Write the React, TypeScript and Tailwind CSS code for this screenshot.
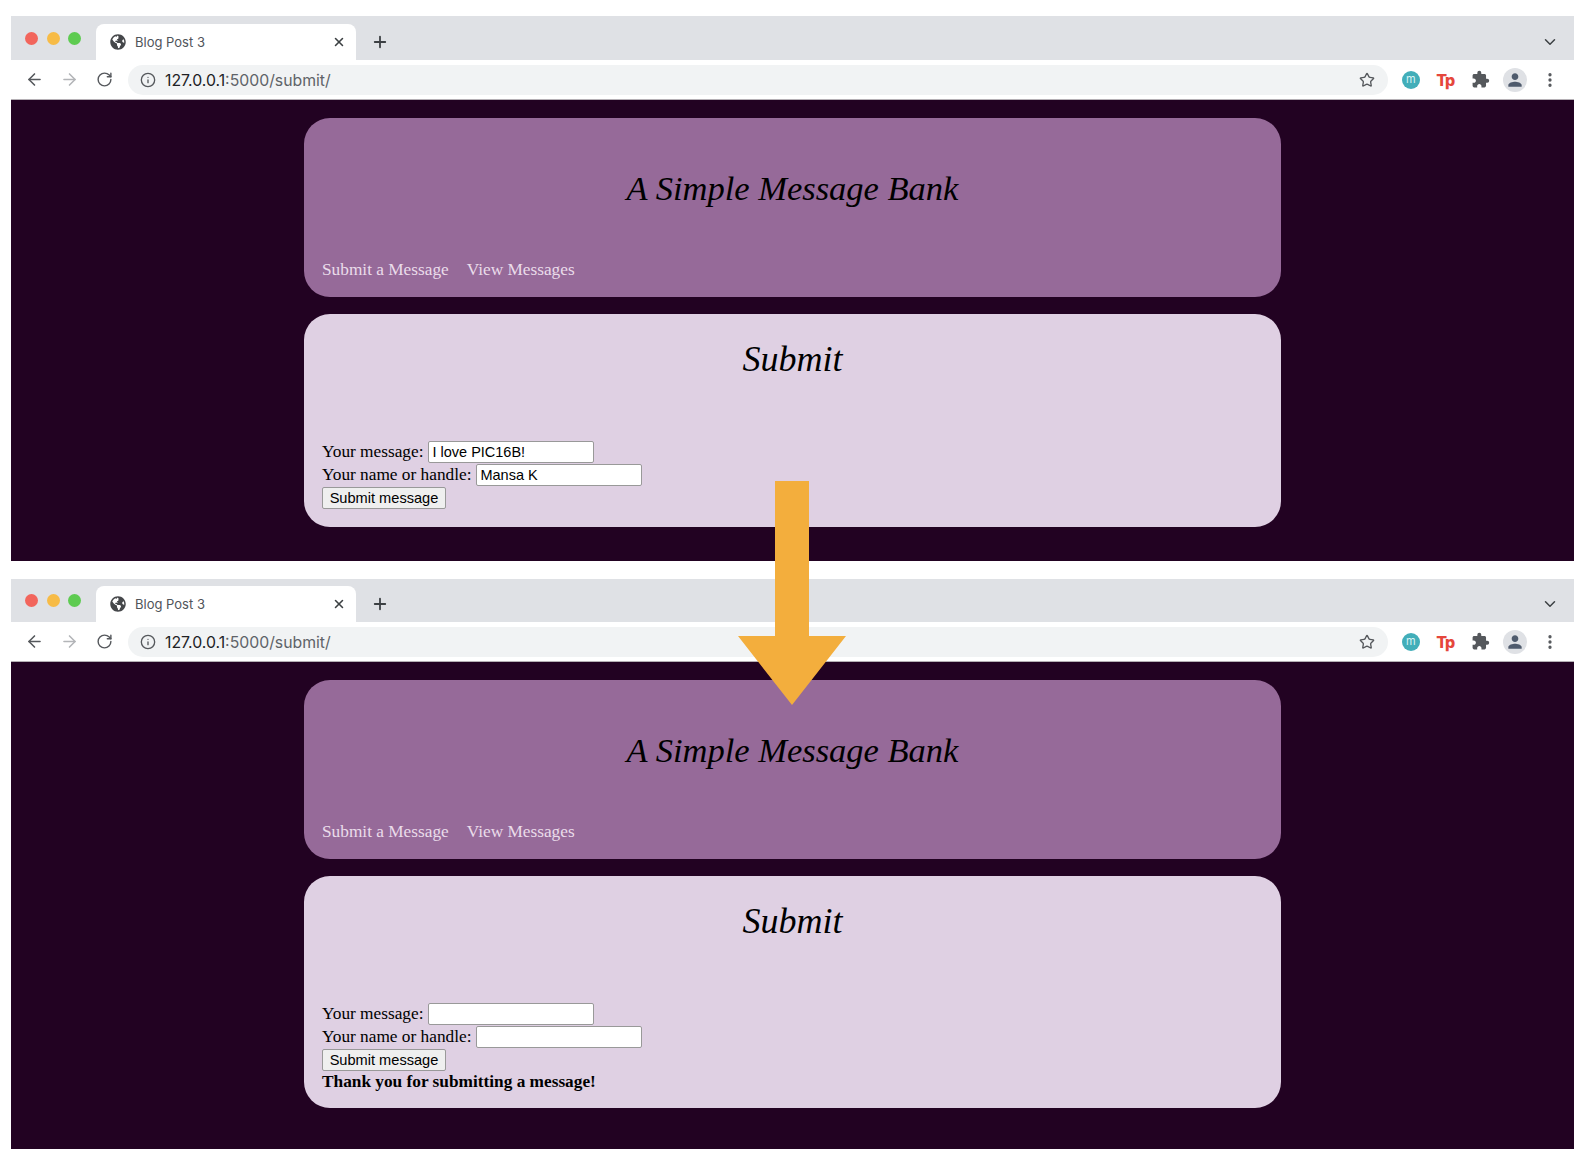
import { ArrowLeft, ArrowRight, ChevronDown, EllipsisVertical, Info, Plus, RotateCw, Star, X } from 'lucide-react';
import { FaGlobeAmericas } from 'react-icons/fa';
import { MdExtension, MdPerson } from 'react-icons/md';

const SERIF = "font-['Liberation_Serif',serif]";

function BrowserChrome({ stripHeight }: { stripHeight: string }) {
  return (
    <>
      {/* Tab strip */}
      <div className={`flex ${stripHeight} shrink-0 items-end bg-[#dfe1e5] font-['Inter',sans-serif]`}>
        <div className="mb-[15px] ml-[14px] flex w-[71px] shrink-0 gap-[8.5px] self-end">
          <span className="h-[13px] w-[13px] rounded-full bg-[#f2655c]" />
          <span className="h-[13px] w-[13px] rounded-full bg-[#f7bb46]" />
          <span className="h-[13px] w-[13px] rounded-full bg-[#5ecb51]" />
        </div>
        <div className="flex h-[36px] w-[260px] shrink-0 items-center rounded-t-lg bg-white pl-[14px] pr-[10px]">
          <FaGlobeAmericas className="h-4 w-4 shrink-0 text-[#45474a]" />
          <span className="ml-[9px] flex-1 pt-px text-[13px] text-[#50545a]">Blog Post 3</span>
          <X className="h-[14px] w-[14px] text-[#3c4043]" strokeWidth={2.6} />
        </div>
        <Plus className="mb-[9px] ml-[15px] h-[18px] w-[18px] text-[#3c4043]" strokeWidth={2.4} />
        <ChevronDown className="mb-[9px] ml-auto mr-[15px] h-[18px] w-[18px] text-[#3c4043]" strokeWidth={2} />
      </div>
      {/* Toolbar */}
      <div className="flex h-10 shrink-0 items-center border-b border-[#b5b0b5] bg-white font-['Inter',sans-serif]">
        <div className="ml-[14px] flex w-[103px] shrink-0 items-center gap-4">
          <ArrowLeft className="h-[19px] w-[19px] text-[#55585c]" strokeWidth={2} />
          <ArrowRight className="h-[19px] w-[19px] text-[#b3b5b8]" strokeWidth={2} />
          <RotateCw className="ml-px h-[17px] w-[17px] text-[#55585c]" strokeWidth={2} />
        </div>
        <div className="flex h-[30px] flex-1 items-center rounded-full bg-[#f1f3f4] pl-[12px] pr-[12px]">
          <Info className="h-4 w-4 shrink-0 text-[#55585c]" strokeWidth={2} />
          <span className="ml-[9px] flex-1 pt-[2px] text-[15.8px] text-[#5f6368]">
            <span className="text-[#202124]">127.0.0.1</span>:5000/submit/
          </span>
          <Star className="mr-px h-4 w-4 text-[#55585c]" strokeWidth={2} />
        </div>
        <div className="ml-[6px] mr-[7px] flex items-center">
          <span className="flex w-[34.5px] justify-center">
            <span className="flex h-[18px] w-[18px] items-center justify-center rounded-full bg-[#42aeb9] pb-px text-[11px] leading-none text-[#d9f3f3]">m</span>
          </span>
          <span className="w-[34.5px] text-center text-[16px] font-extrabold leading-none tracking-[-1px] text-[#e5473c]">Tp</span>
          <span className="ml-px flex w-[34.5px] justify-center">
            <MdExtension className="h-[19px] w-[19px] text-[#55585c]" />
          </span>
          <span className="flex w-[34.5px] justify-center">
            <span className="flex h-6 w-6 items-center justify-center rounded-full bg-[#dfe1e5]">
              <MdPerson className="h-[20px] w-[20px] text-[#4f5b6d]" />
            </span>
          </span>
          <span className="flex w-[34.5px] justify-center">
            <EllipsisVertical className="h-[18px] w-[18px] text-[#55585c]" strokeWidth={2.4} />
          </span>
        </div>
      </div>
    </>
  );
}

function Field({ label, value }: { label: string; value: string }) {
  return (
    <div className="flex h-[23px] items-center">
      <label className="text-[17.3px] leading-none text-black">{label}</label>
      <input
        readOnly
        value={value}
        className="ml-[5px] h-[22px] w-[166px] rounded-[2px] border border-[#999999] bg-white px-[3px] font-['Liberation_Sans',sans-serif] text-[14.5px] text-black outline-none"
      />
    </div>
  );
}

function BlogPage({ message, name, thanks, height }: { message: string; name: string; thanks?: boolean; height: string }) {
  return (
    <div className={`${height} shrink-0 bg-[#220222] pt-[18px] ${SERIF}`}>
      <div className="mx-auto flex w-[977px] flex-col gap-[17px]">
        <header className="flex h-[179px] flex-col rounded-[26px] bg-[#966a99] px-[18px]">
          <h1 className="mt-[48px] text-center text-[34.5px] italic leading-[44px] text-black">A Simple Message Bank</h1>
          <nav className="mt-[49px] flex gap-[18px] text-[17.3px] leading-[22px] text-[#eadcea]">
            <a>Submit a Message</a>
            <a>View Messages</a>
          </nav>
        </header>
        <main className="flex flex-col rounded-[26px] bg-[#dfd0e3] px-[18px] pb-[18px] pt-[23px]">
          <h2 className="text-center text-[36px] italic leading-[44px] text-black">Submit</h2>
          <form className="mt-[59px] flex flex-col items-start">
            <Field label="Your message:" value={message} />
            <Field label="Your name or handle:" value={name} />
            <button
              type="button"
              className="mt-px h-[22px] w-[124px] rounded-[2px] border border-[#999999] bg-[#efefef] font-['Liberation_Sans',sans-serif] text-[14.6px] leading-none text-black"
            >
              Submit message
            </button>
            {thanks && <b className="-mb-[2px] text-[17.3px] leading-[21px] text-black">Thank you for submitting a message!</b>}
          </form>
        </main>
      </div>
    </div>
  );
}

export default function App() {
  return (
    <div className="relative h-[1160px] w-[1586px] overflow-hidden bg-white pt-4">
      <div className="mx-[11px] flex w-[1563px] flex-col">
        <BrowserChrome stripHeight="h-[44px]" />
        <BlogPage message="I love PIC16B!" name="Mansa K" height="h-[461px]" />
      </div>
      <div className="mx-[11px] mt-[18px] flex w-[1563px] flex-col">
        <BrowserChrome stripHeight="h-[43px]" />
        <BlogPage message="" name="" thanks height="h-[487px]" />
      </div>
      {/* Arrow between the two screenshots */}
      <svg className="absolute left-[738px] top-[481px]" width="108" height="224" viewBox="0 0 108 224">
        <path d="M37 0H71V155H108L54 224L0 155H37Z" fill="#f3ae3d" />
      </svg>
    </div>
  );
}
